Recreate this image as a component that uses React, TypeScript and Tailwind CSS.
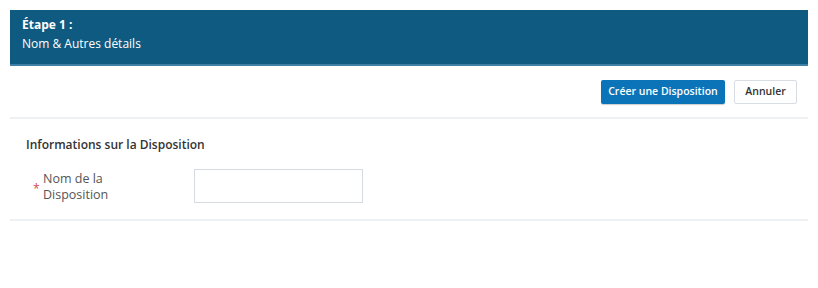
export default function App() {
  return (
    <div className="h-[288px] w-[818px] bg-white p-[10px] font-['Open_Sans',sans-serif]">
      <div className="flex h-[56px] flex-col justify-center border-b-2 border-[#3f7fa3] bg-[#0f5a80] px-3 pb-[6px] text-[12px] leading-[19px] text-white">
        <div className="font-bold">Étape 1 :</div>
        <div>Nom &amp; Autres détails</div>
      </div>

      <div className="flex h-[53px] items-center justify-end gap-[9px] border-b-2 border-[#eef1f4] pr-[11px] pt-[1px]">
        <button className="h-[24px] w-[124px] rounded-[2px] bg-[#0b74b8] text-[10.5px] font-semibold text-white shadow-[0_1px_1px_rgba(0,0,0,0.2)]">
          Créer une Disposition
        </button>
        <button className="h-[24px] w-[63px] rounded-[2px] border border-[#d8dde3] bg-white text-[10.5px] font-semibold text-[#333]">
          Annuler
        </button>
      </div>

      <div className="border-b-2 border-[#eef1f4] px-4 pb-[16px] pt-[16px]">
        <h3 className="text-[12px] font-semibold leading-[20px] text-[#333]">
          Informations sur la Disposition
        </h3>
        <div className="mt-[14px] flex items-center">
          <div className="flex w-[168px] items-center pt-[2px]">
            <span className="ml-[7px] mt-[3px] w-[10px] text-[12px] text-[#e0474c]">*</span>
            <span className="w-[90px] text-[12.5px] leading-[16px] text-[#555]">
              Nom de la Disposition
            </span>
          </div>
          <input className="h-[34px] w-[169px] border border-[#d5dbe1] bg-white outline-none" />
        </div>
      </div>
    </div>
  );
}
